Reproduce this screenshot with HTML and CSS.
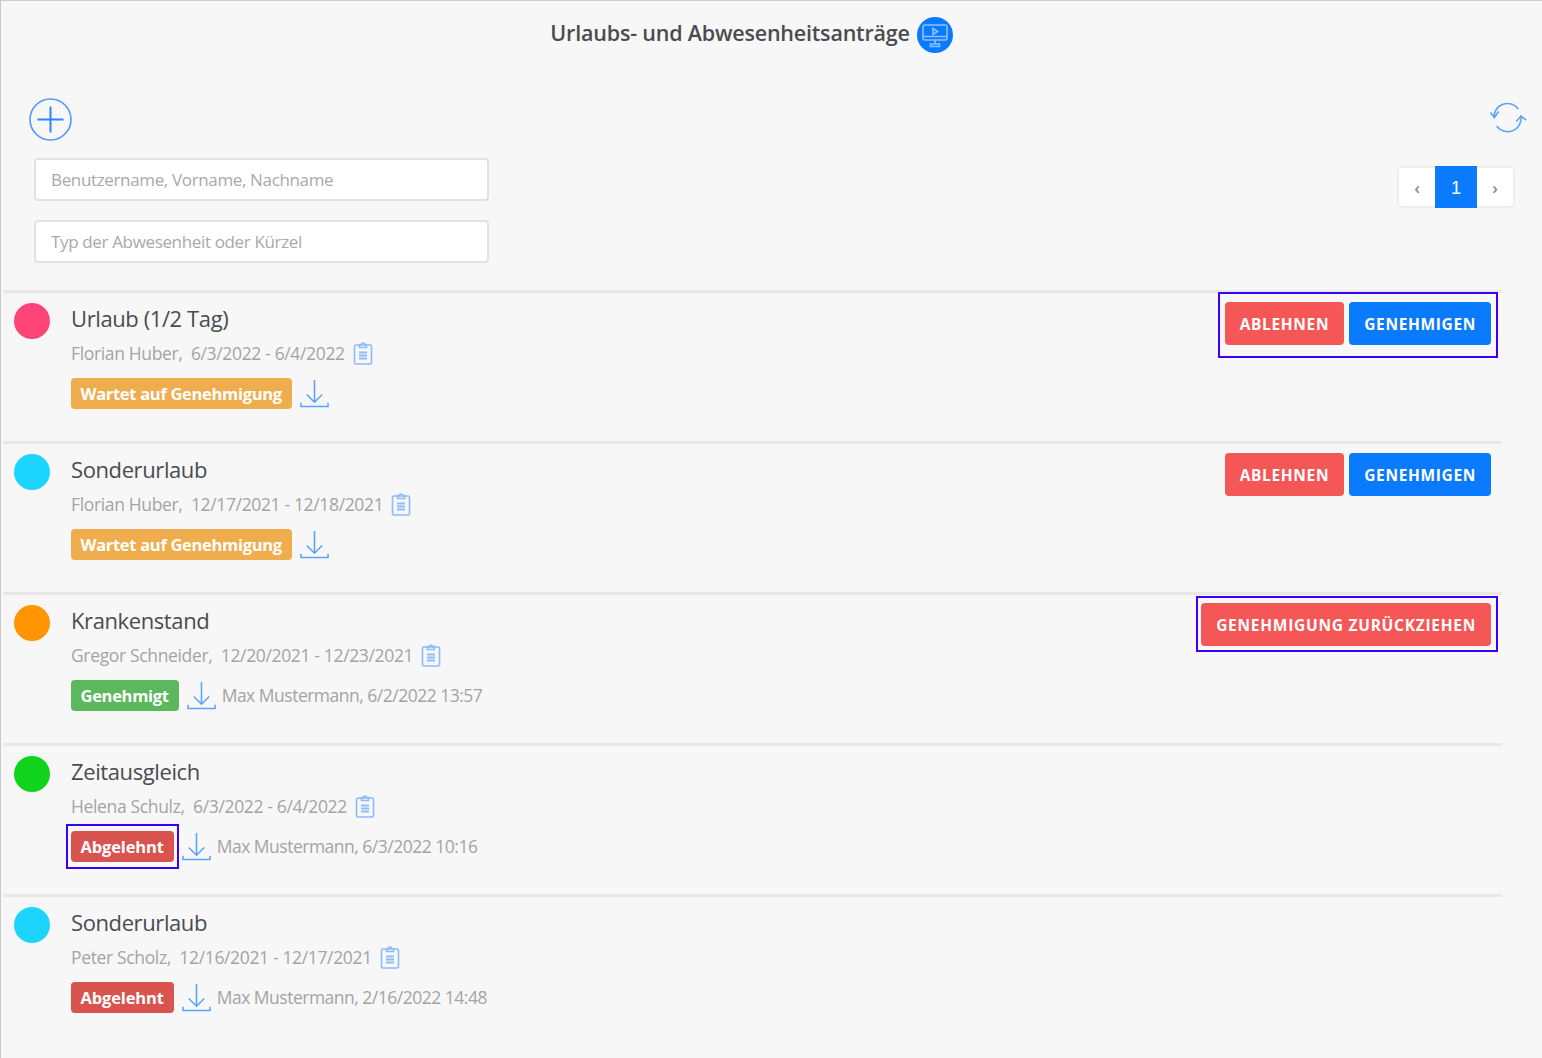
FILE: index.html
```html
<!DOCTYPE html>
<html lang="de">
<head>
<meta charset="utf-8">
<title>Urlaubs- und Abwesenheitsanträge</title>
<link rel="stylesheet" href="styles.css">
</head>
<body>
<main class="page">
  <header class="header">
    <h1 class="heading">Urlaubs- und Abwesenheitsanträge</h1>
    <span class="screen-badge">
      <svg viewBox="0 0 36 36" class="screen-icon" fill="none" stroke="#8fc0ff" stroke-width="1.6"><rect x="6" y="8" width="24" height="15" rx="2"/><path d="M6 19.5h24M18 23v4M13.500 27h9v2.500h-9z"/><path d="M16 11.500l4.500 3-4.500 3z"/></svg>
    </span>
  </header>

  <div class="toolbar">
    <svg class="plus" viewBox="0 0 43 43" fill="none"><circle cx="21.500" cy="21.500" r="20.500" stroke="#4b98ff" stroke-width="1.600"/><path d="M8.500 21.500h26M21.500 8.500v26" stroke="#2a86ff" stroke-width="2"/></svg>
    <svg class="refresh" viewBox="0 0 38 32" fill="none" stroke="#5ba2ff" stroke-width="1.600" stroke-linecap="round"><path d="M4 15.500A13.500 13.500 0 0 1 28 6.500"/><path d="M31 14A13.500 13.500 0 0 1 7 24.500"/><path d="M.7 11L4.500 15.500 8.300 10"/><path d="M26.700 19L31 14l4.700 3.700"/></svg>
  </div>

  <div class="filter-row">
    <div class="filters">
      <input class="field" type="text" placeholder="Benutzername, Vorname, Nachname">
      <input class="field" type="text" placeholder="Typ der Abwesenheit oder Kürzel">
    </div>
    <nav class="pager">
      <span class="pager-cell">‹</span>
      <span class="pager-cell pager-current">1</span>
      <span class="pager-cell">›</span>
    </nav>
  </div>

  <ul class="list">
    <li class="row">
      <span class="dot dot-pink"></span>
      <div class="info">
        <div class="title">Urlaub (1/2 Tag)</div>
        <div class="sub">Florian Huber,&nbsp; 6/3/2022 - 6/4/2022
          <svg class="clip" viewBox="0 0 20 24" fill="none" stroke="#8dbcfb" stroke-width="1.600"><rect x="1.500" y="4" width="17" height="19" rx="1.500"/><path d="M6.500 6.500V3.500h2a1.500 1.500 0 0 1 3 0h2v3z"/><path d="M6 11.500h8M6 14.500h8M6 17.500h8" stroke-width="2"/></svg>
        </div>
        <div class="status">
          <span class="badge badge-wait">Wartet auf Genehmigung</span>
          <svg class="download" viewBox="0 0 30 30" fill="none" stroke="#5ba2ff" stroke-width="1.600"><path d="M15 1v23M7 16l8 8 8-8"/><path d="M1 24.500v4h28v-4"/></svg>
        </div>
      </div>
      <div class="actions marked">
        <button class="btn btn-red">Ablehnen</button>
        <button class="btn btn-blue">Genehmigen</button>
      </div>
    </li>

    <li class="row">
      <span class="dot dot-cyan"></span>
      <div class="info">
        <div class="title">Sonderurlaub</div>
        <div class="sub">Florian Huber,&nbsp; 12/17/2021 - 12/18/2021
          <svg class="clip" viewBox="0 0 20 24" fill="none" stroke="#8dbcfb" stroke-width="1.600"><rect x="1.500" y="4" width="17" height="19" rx="1.500"/><path d="M6.500 6.500V3.500h2a1.500 1.500 0 0 1 3 0h2v3z"/><path d="M6 11.500h8M6 14.500h8M6 17.500h8" stroke-width="2"/></svg>
        </div>
        <div class="status">
          <span class="badge badge-wait">Wartet auf Genehmigung</span>
          <svg class="download" viewBox="0 0 30 30" fill="none" stroke="#5ba2ff" stroke-width="1.600"><path d="M15 1v23M7 16l8 8 8-8"/><path d="M1 24.500v4h28v-4"/></svg>
        </div>
      </div>
      <div class="actions">
        <button class="btn btn-red">Ablehnen</button>
        <button class="btn btn-blue">Genehmigen</button>
      </div>
    </li>

    <li class="row">
      <span class="dot dot-orange"></span>
      <div class="info">
        <div class="title">Krankenstand</div>
        <div class="sub">Gregor Schneider,&nbsp; 12/20/2021 - 12/23/2021
          <svg class="clip" viewBox="0 0 20 24" fill="none" stroke="#8dbcfb" stroke-width="1.600"><rect x="1.500" y="4" width="17" height="19" rx="1.500"/><path d="M6.500 6.500V3.500h2a1.500 1.500 0 0 1 3 0h2v3z"/><path d="M6 11.500h8M6 14.500h8M6 17.500h8" stroke-width="2"/></svg>
        </div>
        <div class="status">
          <span class="badge badge-ok">Genehmigt</span>
          <svg class="download" viewBox="0 0 30 30" fill="none" stroke="#5ba2ff" stroke-width="1.600"><path d="M15 1v23M7 16l8 8 8-8"/><path d="M1 24.500v4h28v-4"/></svg>
          <span class="meta">Max Mustermann, 6/2/2022 13:57</span>
        </div>
      </div>
      <div class="actions marked-wide">
        <button class="btn btn-red">Genehmigung zurückziehen</button>
      </div>
    </li>

    <li class="row">
      <span class="dot dot-green"></span>
      <div class="info">
        <div class="title">Zeitausgleich</div>
        <div class="sub">Helena Schulz,&nbsp; 6/3/2022 - 6/4/2022
          <svg class="clip" viewBox="0 0 20 24" fill="none" stroke="#8dbcfb" stroke-width="1.600"><rect x="1.500" y="4" width="17" height="19" rx="1.500"/><path d="M6.500 6.500V3.500h2a1.500 1.500 0 0 1 3 0h2v3z"/><path d="M6 11.500h8M6 14.500h8M6 17.500h8" stroke-width="2"/></svg>
        </div>
        <div class="status">
          <span class="badge badge-no badge-marked">Abgelehnt</span>
          <svg class="download" viewBox="0 0 30 30" fill="none" stroke="#5ba2ff" stroke-width="1.600"><path d="M15 1v23M7 16l8 8 8-8"/><path d="M1 24.500v4h28v-4"/></svg>
          <span class="meta">Max Mustermann, 6/3/2022 10:16</span>
        </div>
      </div>
    </li>

    <li class="row">
      <span class="dot dot-cyan"></span>
      <div class="info">
        <div class="title">Sonderurlaub</div>
        <div class="sub">Peter Scholz,&nbsp; 12/16/2021 - 12/17/2021
          <svg class="clip" viewBox="0 0 20 24" fill="none" stroke="#8dbcfb" stroke-width="1.600"><rect x="1.500" y="4" width="17" height="19" rx="1.500"/><path d="M6.500 6.500V3.500h2a1.500 1.500 0 0 1 3 0h2v3z"/><path d="M6 11.500h8M6 14.500h8M6 17.500h8" stroke-width="2"/></svg>
        </div>
        <div class="status">
          <span class="badge badge-no">Abgelehnt</span>
          <svg class="download" viewBox="0 0 30 30" fill="none" stroke="#5ba2ff" stroke-width="1.600"><path d="M15 1v23M7 16l8 8 8-8"/><path d="M1 24.500v4h28v-4"/></svg>
          <span class="meta">Max Mustermann, 2/16/2022 14:48</span>
        </div>
      </div>
    </li>
  </ul>
</main>
</body>
</html>
```
FILE: styles.css
```css
* { box-sizing: border-box; }
html, body { margin: 0; height: 100%; }
body {
  background: #f7f7f7;
  font-family: "Open Sans", "Noto Sans", sans-serif;
  color: #4d4f53;
  overflow: hidden;
}
.page {
  height: 1058px;
  border-top: 1px solid #cfcfcf;
  border-left: 1px solid #c9c9c9;
  padding-left: 2px;
}
.header {
  display: flex;
  justify-content: center;
  align-items: center;
  gap: 7px;
  height: 68px;
  padding-right: 42px;
}
.heading { margin: 0 0 5px; font-size: 21.5px; font-weight: 600; color: #4a4c50; letter-spacing: -0.2px; }
.screen-badge {
  width: 36px; height: 36px; border-radius: 50%;
  background: #0a7bff;
  display: flex; align-items: center; justify-content: center;
}
.screen-icon { width: 36px; height: 36px; }
.toolbar {
  display: flex; justify-content: space-between; align-items: flex-start;
  padding: 29px 14px 0 26px;
  height: 89px;
}
.plus { width: 43px; height: 43px; }
.refresh { width: 38px; height: 32px; margin-top: 4px; }
.filter-row {
  display: flex; justify-content: space-between; align-items: flex-start;
  height: 132px;
  padding: 0 27px 0 31px;
}
.filters { display: flex; flex-direction: column; gap: 19px; }
.field {
  width: 455px; height: 43px;
  background: #fff;
  border: 2px solid #e2e2e2;
  border-radius: 4px;
  padding: 0 15px;
  font: 17px "Open Sans", "Noto Sans", sans-serif;
  letter-spacing: -0.35px;
  color: #555;
}
.field::placeholder { color: #a9a9a9; opacity: 1; }
.pager {
  display: flex; margin-top: 8px;
  height: 42px;
  background: #fff;
  border: 2px solid #eeeeee;
  border-radius: 5px;
}
.pager-cell {
  width: 36px; display: flex; align-items: center; justify-content: center;
  font-size: 17px; font-weight: 600; color: #8a8a8a;
}
.pager-current {
  width: 42px; background: #0a7bff; color: #fff; margin: -2px 0;
  padding-top: 3px;
  font: 18px "Liberation Sans", sans-serif;
}
.list { list-style: none; margin: 0; padding: 0; width: 1499px; }
.row {
  display: flex; align-items: flex-start;
  height: 151px;
  border-top: 3px solid #e8e8e8;
  padding: 8px 11px 0 11px;
}
.dot { width: 36px; height: 36px; border-radius: 50%; flex: none; margin-top: 2px; }
.dot-pink { background: #ff4577; }
.dot-cyan { background: #1cd5ff; }
.dot-orange { background: #ff9500; }
.dot-green { background: #0fd41b; }
.info { margin-left: 21px; flex: 1; }
.title { font-size: 22px; line-height: 34px; color: #4a4c50; letter-spacing: -0.4px; }
.sub {
  font-size: 17.5px; line-height: 24px; margin-top: 6px; color: #a4a4a4;
  letter-spacing: -0.35px; display: flex; align-items: center; gap: 8px;
}
.clip { width: 20px; height: 24px; }
.status { display: flex; align-items: center; gap: 8px; margin-top: 11px; height: 34px; margin-left: -0.5px; }
.badge {
  display: inline-flex; align-items: center;
  height: 31px; padding: 0 10px;
  border-radius: 4px;
  color: #fff; font-size: 16.5px; font-weight: 700; letter-spacing: -0.3px;
}
.badge-wait { background: #f0ad4e; }
.badge-ok { background: #5cb85c; }
.badge-no { background: #d9534f; letter-spacing: -0.15px; }
.badge-marked { position: relative; }
.badge-marked::after {
  content: ""; position: absolute; inset: -7px -5px;
  border: 2px solid #3a00ff;
}
.download { width: 29px; height: 29px; }
.meta { font-size: 17.5px; color: #a4a4a4; letter-spacing: -0.5px; margin-left: -2px; }
.actions { display: flex; gap: 5px; position: relative; margin-top: 1px; }
.marked::after, .marked-wide::after {
  content: ""; position: absolute;
  border: 2px solid #3a00ff;
}
.marked::after { inset: -10px -7px -13px -7px; }
.marked-wide { margin-top: 0; }
.marked-wide .btn { letter-spacing: 0.73px; }
.marked-wide::after { inset: -7px -7px -6px -5px; }
.btn {
  height: 43px; padding: 0 15px;
  border: 0; border-radius: 4px;
  color: #fff;
  font: 700 15.5px "Open Sans", "Noto Sans", sans-serif;
  letter-spacing: 0.65px;
  text-transform: uppercase;
}
.btn-red { background: #f55656; }
.btn-blue { background: #0a7bff; }
```
